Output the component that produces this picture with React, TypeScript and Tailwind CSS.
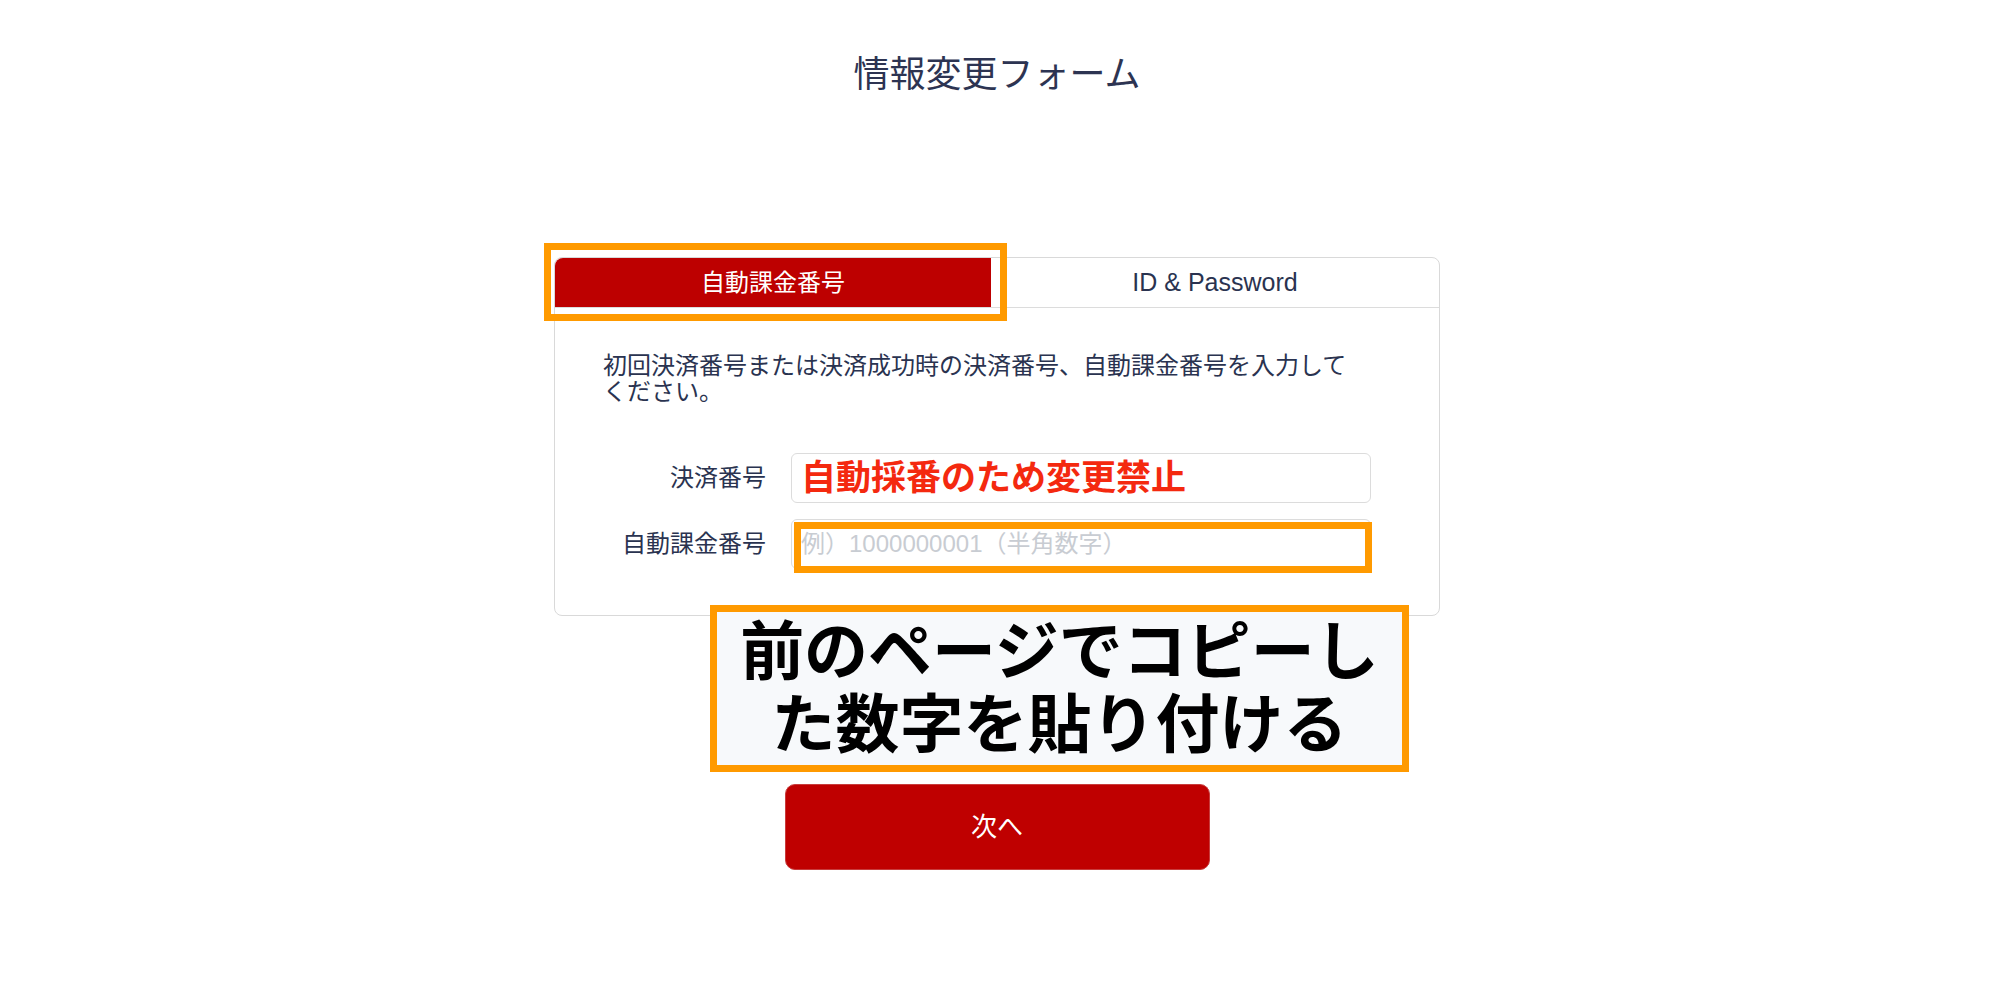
import React from "react";

const jp = "font-['Liberation_Sans','Noto_Sans_CJK_JP',sans-serif]";

export default function App() {
  return (
    <div className={`min-h-screen w-full bg-white flex flex-col items-center pr-[6px] ${jp}`}>
      <h1 className="pt-[48px] text-[36px] leading-[54px] font-normal text-[#2d3452]">
        情報変更フォーム
      </h1>

      <div className="relative mt-[155px] w-[886px]">
        <div className="rounded-lg border border-[#d9d9d9] bg-white">
          {/* tabs */}
          <div className="flex h-[50px] border-b border-[#dcdcdc]">
            <div className="relative w-[436px]">
              <div className="flex h-full items-center justify-center rounded-tl-lg bg-[#bd0000] text-[24px] text-white">
                自動課金番号
              </div>
              <div className="absolute -left-[11px] -right-[16px] -top-[15px] -bottom-[14px] border-[7px] border-[#ff9a00]" />
            </div>
            <div className="flex flex-1 items-center justify-center text-[25px] text-[#2a3350]">
              ID &amp; Password
            </div>
          </div>

          <div className="px-[48px] pt-[45px] pb-[46px]">
            <p className="w-[750px] text-[24px] leading-[26px] text-[#2a3350]">
              初回決済番号または決済成功時の決済番号、自動課金番号を入力してください。
            </p>

            <div className="mt-[48px] flex flex-col gap-[16px]">
              <div className="flex items-center">
                <label className="w-[163px] text-right text-[24px] text-[#2a3350]">決済番号</label>
                <div className="ml-[25px] flex h-[50px] w-[580px] items-center rounded-md border border-[#dcdcdc] pl-[9px] text-[35px] font-bold text-[#f4290f]">
                  自動採番のため変更禁止
                </div>
              </div>
              <div className="flex items-center">
                <label className="w-[163px] text-right text-[24px] text-[#2a3350]">自動課金番号</label>
                <div className="relative ml-[25px] h-[50px] w-[580px]">
                  <input
                    type="text"
                    placeholder="例）1000000001（半角数字）"
                    className="h-full w-full rounded-md border border-[#dcdcdc] pl-[9px] text-[24px] outline-none placeholder:text-[#c8ccd2]"
                  />
                  <div className="absolute left-[3px] -right-[1px] top-[3px] -bottom-[4px] border-[7px] border-[#ff9a00]" />
                </div>
              </div>
            </div>
          </div>
        </div>

        {/* callout */}
        <div className="absolute left-[156px] top-[348px] flex h-[167px] w-[699px] items-center justify-center border-[7px] border-[#ff9a00] bg-[#f7f9fb] text-center text-[64px] font-bold leading-[73px] text-black">
          <span>
            前のページでコピーし
            <br />
            た数字を貼り付ける
          </span>
        </div>
      </div>

      <button className="mt-[168px] h-[86px] w-[425px] rounded-[10px] border border-[#c83c3c] bg-[#bf0000] text-[26px] text-white">
        次へ
      </button>
    </div>
  );
}
